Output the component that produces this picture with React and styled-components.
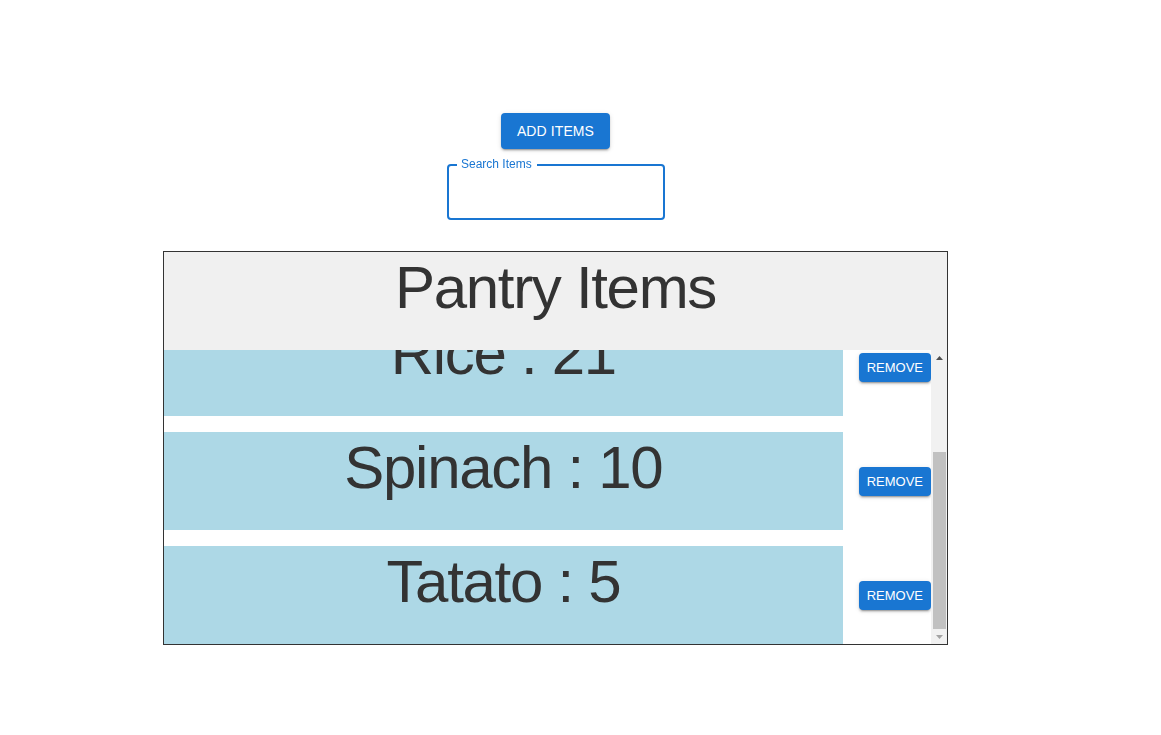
import React, { useEffect, useRef } from "react";
import styled, { createGlobalStyle } from "styled-components";

const GlobalStyle = createGlobalStyle`
  html, body {
    margin: 0;
    padding: 0;
    background: #fff;
    font-family: "Liberation Sans", Arial, sans-serif;
  }
  * {
    box-sizing: border-box;
  }
`;

const Page = styled.div`
  width: 100%;
  height: 100vh;
  display: flex;
  flex-direction: column;
  align-items: center;
  padding: 113px 50px 0 0;
`;

const Controls = styled.div`
  display: flex;
  flex-direction: column;
  align-items: center;
  gap: 15px;
`;

const Button = styled.button`
  border: 0;
  cursor: pointer;
  background: #1976d2;
  color: #fff;
  font-family: "Liberation Sans", Arial, sans-serif;
  font-weight: 500;
  text-transform: uppercase;
  letter-spacing: ${(p) => (p.small ? "0" : "0.1px")};
  border-radius: 4px;
  font-size: ${(p) => (p.small ? "13px" : "14px")};
  line-height: ${(p) => (p.small ? "21px" : "24px")};
  padding: ${(p) => (p.small ? "4px 8px" : "6px 16px")};
  flex-shrink: 0;
  box-shadow: 0px 3px 1px -2px rgba(0, 0, 0, 0.2),
    0px 2px 2px 0px rgba(0, 0, 0, 0.14), 0px 1px 5px 0px rgba(0, 0, 0, 0.12);
`;

const Field = styled.div`
  position: relative;
  width: 218px;
  display: inline-flex;
`;

const Label = styled.label`
  position: absolute;
  left: 0;
  top: 0;
  font-size: 16px;
  line-height: 1.4375;
  color: #1976d2;
  transform: translate(14px, -9px) scale(0.75);
  transform-origin: top left;
  white-space: nowrap;
  pointer-events: none;
  z-index: 1;
`;

const Input = styled.input`
  width: 100%;
  border: 0;
  outline: 0;
  background: none;
  font-family: "Liberation Sans", Arial, sans-serif;
  font-size: 16px;
  height: 23px;
  padding: 16.5px 13px;
  box-sizing: content-box;
  color: rgba(0, 0, 0, 0.87);
  caret-color: rgba(0, 0, 0, 0.87);
`;

const Outline = styled.fieldset`
  position: absolute;
  top: -5px;
  left: 0;
  right: 0;
  bottom: 0;
  margin: 0;
  padding: 0 8px;
  border: 2px solid #1976d2;
  border-radius: 4px;
  pointer-events: none;
  text-align: left;

  legend {
    float: unset;
    width: auto;
    padding: 0;
    height: 11px;
    font-size: 12px;
    visibility: hidden;
    white-space: nowrap;
    line-height: 11px;
  }

  legend span {
    padding: 0 5px;
    display: inline-block;
  }
`;

const Pantry = styled.div`
  margin-top: 31px;
  border: 1px solid #333;
  width: 785px;
`;

const Header = styled.div`
  height: 98px;
  background: #f0f0f0;
  color: #333;
  font-size: 60px;
  line-height: 1.2;
  letter-spacing: -1.3px;
  text-align: center;
`;

const Body = styled.div`
  height: 294px;
  display: flex;
`;

const List = styled.div`
  flex: 1;
  min-width: 0;
  overflow: hidden;
  display: flex;
  flex-direction: column;
  gap: 16px;
`;

const ScrollTrack = styled.div`
  width: 16px;
  flex-shrink: 0;
  background: #f1f1f1;
  display: flex;
  flex-direction: column;
`;

const ScrollArrow = styled.div`
  height: 15px;
  display: flex;
  align-items: center;
  justify-content: center;
  flex-shrink: 0;
`;

const ScrollSpace = styled.div`
  flex: 1;
`;

const ScrollThumb = styled.div`
  height: 177px;
  margin: 0 1px 0 2px;
  background: #c1c1c1;
`;

const Row = styled.div`
  display: flex;
  align-items: center;
  gap: 16px;
  flex-shrink: 0;
`;

const ItemName = styled.div`
  flex: 1;
  height: 98px;
  background: #add8e6;
  color: #333;
  font-size: 60px;
  line-height: 1.2;
  letter-spacing: -1.3px;
  text-align: center;
`;

const Arrow = ({ down, color }) => (
  <svg width="7" height="4" viewBox="0 0 7 4">
    <polygon
      points={down ? "0,0 7,0 3.5,4" : "0,4 7,4 3.5,0"}
      fill={color}
    />
  </svg>
);

const items = [
  { name: "Apple", quantity: 3 },
  { name: "Rice", quantity: 21 },
  { name: "Spinach", quantity: 10 },
  { name: "Tatato", quantity: 5 },
];

const App = () => {
  const listRef = useRef(null);

  useEffect(() => {
    if (listRef.current) {
      listRef.current.scrollTop = listRef.current.scrollHeight;
    }
  }, []);

  return (
    <>
      <GlobalStyle />
      <Page>
        <Controls>
          <Button>Add Items</Button>
          <Field>
            <Label htmlFor="search">Search Items</Label>
            <Input id="search" autoFocus />
            <Outline aria-hidden="true">
              <legend>
                <span>Search Items</span>
              </legend>
            </Outline>
          </Field>
        </Controls>
        <Pantry>
          <Header>Pantry Items</Header>
          <Body>
            <List ref={listRef}>
              {items.map(({ name, quantity }) => (
                <Row key={name}>
                  <ItemName>
                    {name} : {quantity}
                  </ItemName>
                  <Button small>Remove</Button>
                </Row>
              ))}
            </List>
            <ScrollTrack>
              <ScrollArrow>
                <Arrow color="#505050" />
              </ScrollArrow>
              <ScrollSpace />
              <ScrollThumb />
              <ScrollArrow>
                <Arrow down color="#a3a3a3" />
              </ScrollArrow>
            </ScrollTrack>
          </Body>
        </Pantry>
      </Page>
    </>
  );
};

export default App;
